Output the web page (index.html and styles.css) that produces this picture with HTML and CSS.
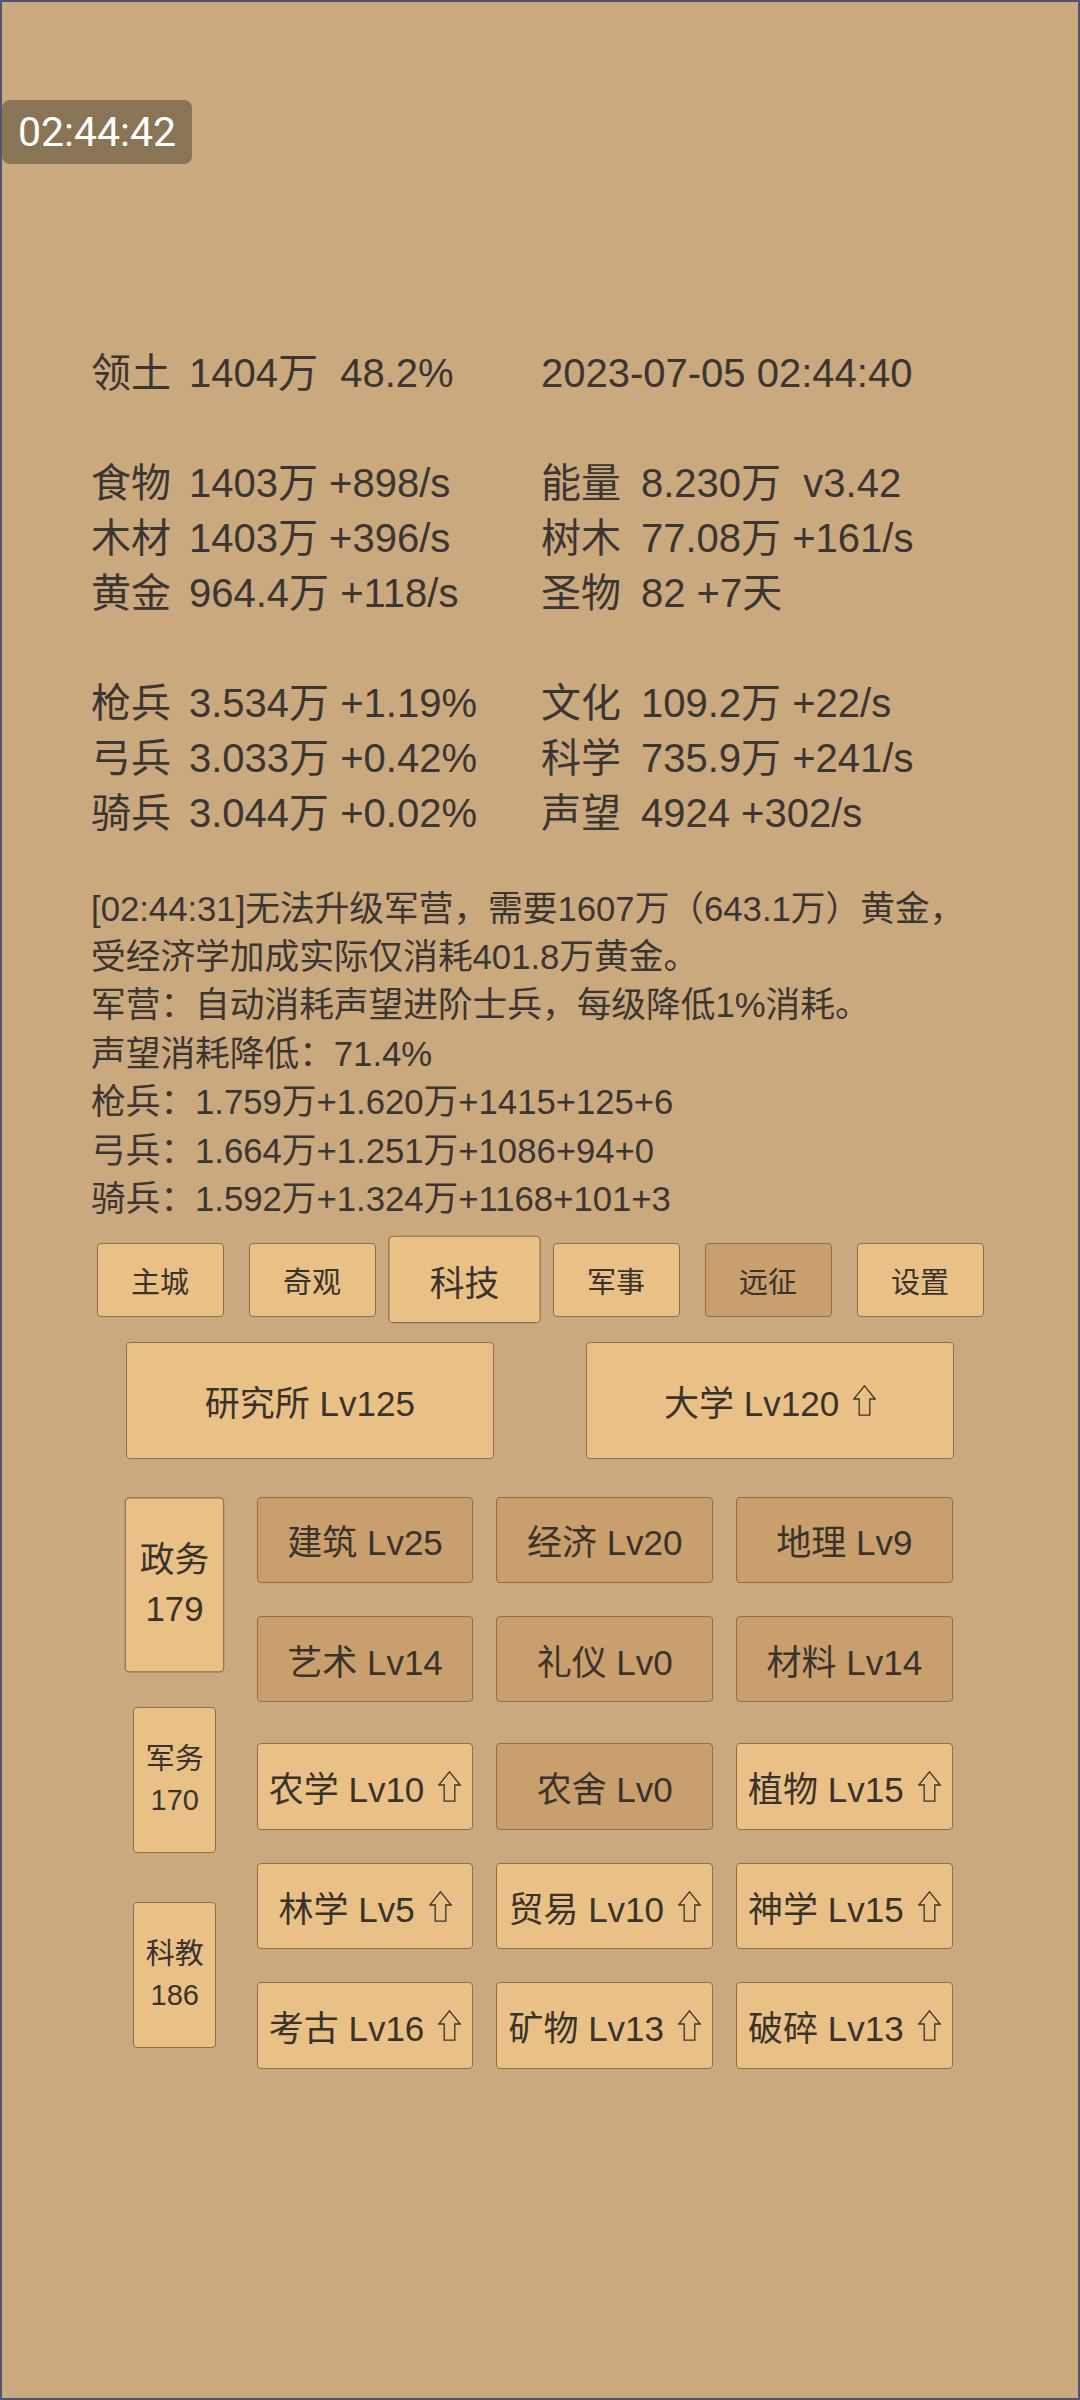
FILE: index.html
```html
<!DOCTYPE html>
<html lang="zh-CN">
<head>
<meta charset="utf-8">
<link rel="stylesheet" href="styles.css">
</head>
<body>
<div class="frame">
  <div class="timer">02:44:42</div>

  <div class="stats">
    <div class="cell"><span class="lbl">领土</span><span>1404万  48.2%</span></div>
    <div class="cell right"><span>2023-07-05 02:44:40</span></div>
    <div class="cell blank"></div>
    <div class="cell"><span class="lbl">食物</span><span>1403万 +898/s</span></div>
    <div class="cell right"><span class="lbl">能量</span><span>8.230万  v3.42</span></div>
    <div class="cell"><span class="lbl">木材</span><span>1403万 +396/s</span></div>
    <div class="cell right"><span class="lbl">树木</span><span>77.08万 +161/s</span></div>
    <div class="cell"><span class="lbl">黄金</span><span>964.4万 +118/s</span></div>
    <div class="cell right"><span class="lbl">圣物</span><span>82 +7天</span></div>
    <div class="cell blank"></div>
    <div class="cell"><span class="lbl">枪兵</span><span>3.534万 +1.19%</span></div>
    <div class="cell right"><span class="lbl">文化</span><span>109.2万 +22/s</span></div>
    <div class="cell"><span class="lbl">弓兵</span><span>3.033万 +0.42%</span></div>
    <div class="cell right"><span class="lbl">科学</span><span>735.9万 +241/s</span></div>
    <div class="cell"><span class="lbl">骑兵</span><span>3.044万 +0.02%</span></div>
    <div class="cell right"><span class="lbl">声望</span><span>4924 +302/s</span></div>
  </div>

  <div class="log">
    <div>[02:44:31]无法升级军营，需要1607万（643.1万）黄金，</div>
    <div>受经济学加成实际仅消耗401.8万黄金。</div>
    <div>军营：自动消耗声望进阶士兵，每级降低1%消耗。</div>
    <div>声望消耗降低：71.4%</div>
    <div>枪兵：1.759万+1.620万+1415+125+6</div>
    <div>弓兵：1.664万+1.251万+1086+94+0</div>
    <div>骑兵：1.592万+1.324万+1168+101+3</div>
  </div>

  <div class="tabs">
    <div class="btn tab">主城</div>
    <div class="btn tab">奇观</div>
    <div class="btn tab sel">科技</div>
    <div class="btn tab">军事</div>
    <div class="btn tab dark">远征</div>
    <div class="btn tab">设置</div>
  </div>

  <div class="big">
    <div class="btn bigbtn">研究所 Lv125</div>
    <div class="btn bigbtn">大学 Lv120<svg class="up" viewBox="0 0 23 31"><path d="M11.5 0.8 L22.2 14 L16.8 14 L16.8 30.2 L6.2 30.2 L6.2 14 L0.8 14 Z"/></svg></div>
  </div>

  <div class="tech">
    <div class="cats">
      <div class="btn cat sel"><span>政务</span><span>179</span></div>
      <div class="btn cat"><span>军务</span><span>170</span></div>
      <div class="btn cat"><span>科教</span><span>186</span></div>
    </div>
    <div class="grid">
      <div class="row">
        <div class="btn item dark">建筑 Lv25</div>
        <div class="btn item dark">经济 Lv20</div>
        <div class="btn item dark">地理 Lv9</div>
      </div>
      <div class="row">
        <div class="btn item dark">艺术 Lv14</div>
        <div class="btn item dark">礼仪 Lv0</div>
        <div class="btn item dark">材料 Lv14</div>
      </div>
      <div class="row r3">
        <div class="btn item">农学 Lv10<svg class="up" viewBox="0 0 23 31"><path d="M11.5 0.8 L22.2 14 L16.8 14 L16.8 30.2 L6.2 30.2 L6.2 14 L0.8 14 Z"/></svg></div>
        <div class="btn item dark">农舍 Lv0</div>
        <div class="btn item">植物 Lv15<svg class="up" viewBox="0 0 23 31"><path d="M11.5 0.8 L22.2 14 L16.8 14 L16.8 30.2 L6.2 30.2 L6.2 14 L0.8 14 Z"/></svg></div>
      </div>
      <div class="row">
        <div class="btn item">林学 Lv5<svg class="up" viewBox="0 0 23 31"><path d="M11.5 0.8 L22.2 14 L16.8 14 L16.8 30.2 L6.2 30.2 L6.2 14 L0.8 14 Z"/></svg></div>
        <div class="btn item">贸易 Lv10<svg class="up" viewBox="0 0 23 31"><path d="M11.5 0.8 L22.2 14 L16.8 14 L16.8 30.2 L6.2 30.2 L6.2 14 L0.8 14 Z"/></svg></div>
        <div class="btn item">神学 Lv15<svg class="up" viewBox="0 0 23 31"><path d="M11.5 0.8 L22.2 14 L16.8 14 L16.8 30.2 L6.2 30.2 L6.2 14 L0.8 14 Z"/></svg></div>
      </div>
      <div class="row">
        <div class="btn item">考古 Lv16<svg class="up" viewBox="0 0 23 31"><path d="M11.5 0.8 L22.2 14 L16.8 14 L16.8 30.2 L6.2 30.2 L6.2 14 L0.8 14 Z"/></svg></div>
        <div class="btn item">矿物 Lv13<svg class="up" viewBox="0 0 23 31"><path d="M11.5 0.8 L22.2 14 L16.8 14 L16.8 30.2 L6.2 30.2 L6.2 14 L0.8 14 Z"/></svg></div>
        <div class="btn item">破碎 Lv13<svg class="up" viewBox="0 0 23 31"><path d="M11.5 0.8 L22.2 14 L16.8 14 L16.8 30.2 L6.2 30.2 L6.2 14 L0.8 14 Z"/></svg></div>
      </div>
    </div>
  </div>
</div>
</body>
</html>
```

FILE: styles.css
```css
* { box-sizing: border-box; }

html, body {
  margin: 0;
  padding: 0;
  background: #caa97f;
}

.frame {
  position: relative;
  width: 1080px;
  height: 2400px;
  border: 2px solid #4f5470;
  background: #caa97f;
  font-family: "Liberation Sans", "Noto Sans CJK SC", sans-serif;
  color: #3b3631;
  overflow: hidden;
}

.timer {
  position: absolute;
  left: 0;
  top: 98px;
  width: 190px;
  height: 64px;
  background: #8a7456;
  border-radius: 8px;
  color: #ffffff;
  font-family: Roboto, "Noto Sans", sans-serif;
  font-size: 41px;
  line-height: 64px;
  padding-left: 16px;
}

/* stats */
.stats {
  margin: 343.6px 0 0 89px;
  display: grid;
  grid-template-columns: 450px 450px;
  grid-auto-rows: 55px;
  font-size: 40px;
  line-height: 55px;
  white-space: pre;
}

.cell {
  display: flex;
  height: 55px;
}

.cell.blank {
  grid-column: 1 / span 2;
}

.lbl {
  flex: none;
  width: 98px;
}

.right .lbl {
  width: 100px;
}

/* log */
.log {
  margin: 44.1px 0 0 89px;
  font-size: 34.7px;
  line-height: 48.4px;
}

.log div {
  height: 48.4px;
  white-space: nowrap;
}

/* buttons */
.btn {
  display: flex;
  align-items: center;
  justify-content: center;
  background: #e9c187;
  border: 1px solid #8f6e4a;
  border-radius: 4px;
  color: #3a332c;
  white-space: nowrap;
}

.btn.dark {
  background: #c99f6d;
}

.tabs {
  margin-top: 19.8px;
  display: flex;
  justify-content: center;
  gap: 25px;
  height: 73.4px;
}

.tab {
  width: 127px;
  height: 73.4px;
  font-size: 29px;
}

.sel {
  transform: scale(1.2);
}

.big {
  margin-top: 25px;
  display: flex;
  justify-content: center;
  gap: 92.5px;
}

.bigbtn {
  width: 367.7px;
  height: 117px;
  font-size: 35px;
}

.up {
  width: 23px;
  height: 31px;
  margin-left: 14px;
  flex: none;
}

.up path {
  fill: none;
  stroke: #3a332c;
  stroke-width: 1.3;
  stroke-linejoin: miter;
}

.tech {
  margin-top: 38px;
  display: flex;
  align-items: flex-start;
  padding-left: 131.3px;
  gap: 40.4px;
}

.cats {
  display: flex;
  flex-direction: column;
  gap: 48.7px;
  padding-top: 15px;
  width: 83px;
}

.cat {
  width: 83px;
  height: 146.3px;
  flex-direction: column;
  font-size: 29px;
  line-height: 41px;
}

.grid {
  display: flex;
  flex-direction: column;
}

.row {
  display: grid;
  grid-template-columns: repeat(3, 216.7px);
  column-gap: 23px;
  height: 86.7px;
}

.row + .row {
  margin-top: 32.5px;
}

.row.r3 {
  margin-top: 41px;
}

.item {
  height: 86.7px;
  font-size: 35px;
}
```
